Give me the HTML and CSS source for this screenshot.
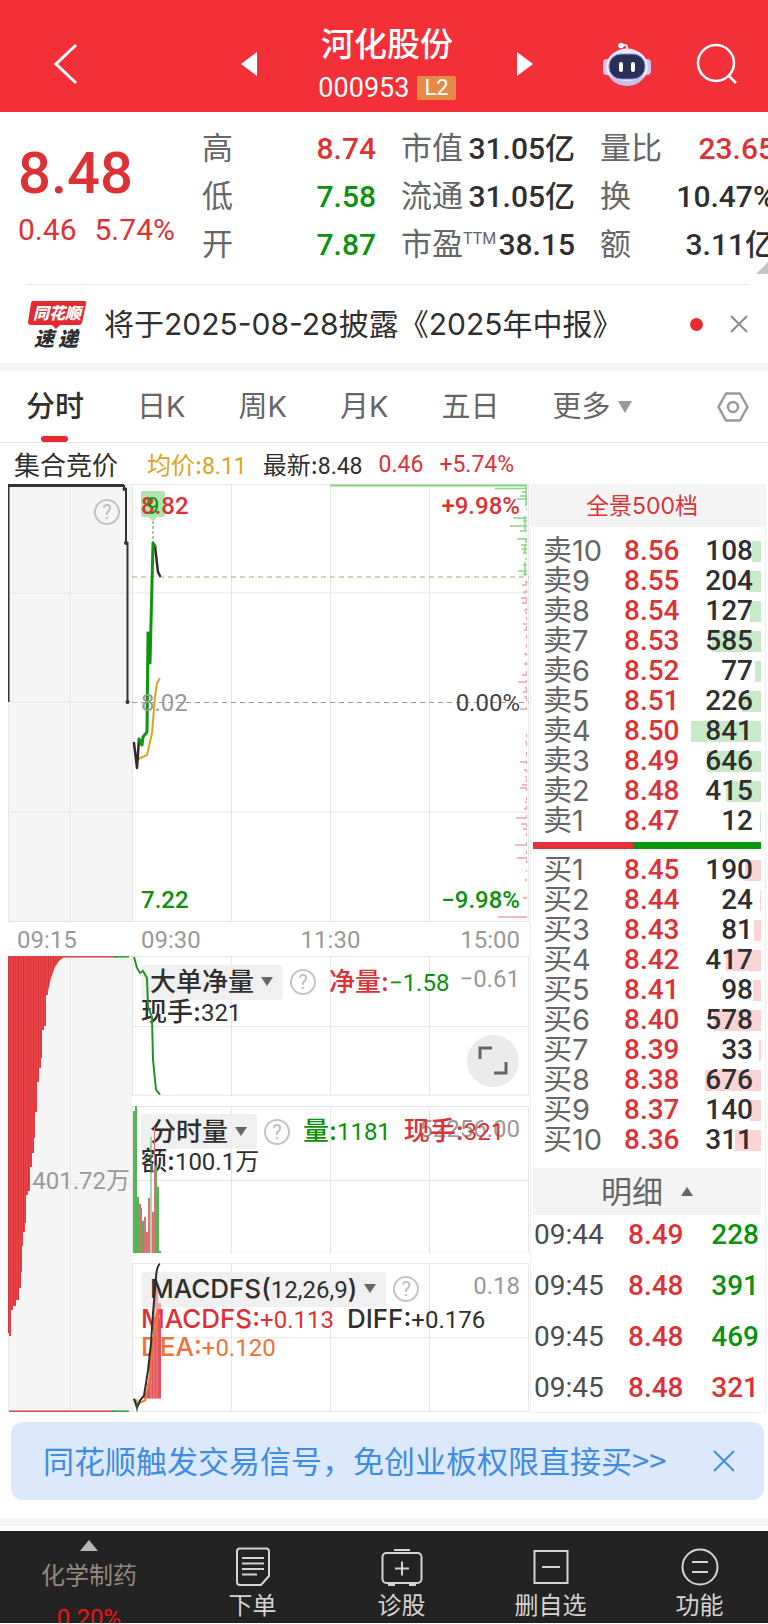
FILE: index.html
```html
<!DOCTYPE html>
<html lang="zh-CN">
<head>
<meta charset="utf-8">
<meta name="viewport" content="width=device-width, initial-scale=1">
<title>河化股份 000953</title>
<link rel="stylesheet" href="styles.css">
</head>
<body>
<header class="topbar">
  <button class="icon-btn back" aria-label="返回"><svg width="28" height="44" viewBox="0 0 28 44"><path d="M24 3 4 22l20 19" fill="none" stroke="#fff" stroke-width="3"/></svg></button>
  <div class="stock-nav">
    <button class="icon-btn" aria-label="上一只"><svg width="18" height="24" viewBox="0 0 18 24"><path d="M17 0v24L1 12z" fill="#fff"/></svg></button>
    <div class="stock-title">
      <h1 class="stock-name">河化股份</h1>
      <div class="stock-code">000953 <span class="level">L2</span></div>
    </div>
    <button class="icon-btn" aria-label="下一只"><svg width="18" height="24" viewBox="0 0 18 24"><path d="M1 0v24l16-12z" fill="#fff"/></svg></button>
  </div>
  <div class="top-actions">
    <button class="icon-btn" aria-label="智能助手"><svg width="48" height="44" viewBox="0 0 48 44">
      <path d="M24 9V5q0-2-3-2h-3" fill="none" stroke="#e9e2fb" stroke-width="2"/><circle cx="18" cy="3.500" r="2.800" fill="#fff"/>
      <rect x="0" y="17" width="8" height="16" rx="4" fill="#c9c4f2"/><rect x="40" y="17" width="8" height="16" rx="4" fill="#c9c4f2"/>
      <ellipse cx="24" cy="25" rx="21" ry="18.500" fill="#efeafd"/><path d="M6 33q18 12 36 0-5 11-18 11T6 33z" fill="#c5bff0"/>
      <rect x="6" y="12" width="36" height="25" rx="12" fill="#2a2f55" stroke="#8f86d8" stroke-width="1"/>
      <rect x="16" y="20" width="4" height="10" rx="2" fill="#fff"/><rect x="28" y="20" width="4" height="10" rx="2" fill="#fff"/></svg></button>
    <button class="icon-btn" aria-label="搜索"><svg width="42" height="42" viewBox="0 0 42 42"><g fill="none" stroke="#fff" stroke-width="2.500"><circle cx="20" cy="20" r="18"/><path d="m32 32 8 8"/></g></svg></button>
  </div>
</header>

<main>
<section class="quote">
  <div class="quote-price">
    <div class="last up">8.48</div>
    <div class="change up"><span>0.46</span><span>5.74%</span></div>
  </div>
  <dl class="stats stats-a">
    <div><dt>高</dt><dd class="up">8.74</dd></div>
    <div><dt>低</dt><dd class="down">7.58</dd></div>
    <div><dt>开</dt><dd class="down">7.87</dd></div>
  </dl>
  <dl class="stats stats-b">
    <div><dt>市值</dt><dd>31.05亿</dd></div>
    <div><dt>流通</dt><dd>31.05亿</dd></div>
    <div><dt>市盈<sup>TTM</sup></dt><dd>38.15</dd></div>
  </dl>
  <dl class="stats stats-c">
    <div><dt>量比</dt><dd class="up">23.65</dd></div>
    <div><dt>换</dt><dd>10.47%</dd></div>
    <div><dt>额</dt><dd>3.11亿</dd></div>
  </dl>
  <span class="corner"></span>
</section>

<section class="news">
  <svg class="news-logo" width="60" height="48" viewBox="0 0 60 48" role="img" aria-label="同花顺速递">
    <path d="M6 1h51q3 0 2 3l-4 19q-1 2-3 2H33l-4 4-4-4H4q-3 0-3-3L4 3q0-2 2-2z" fill="#e42a30"/>
    <text x="6" y="19" class="logo-a">同花顺</text>
    <text x="7" y="46" class="logo-b">速</text><text x="31" y="46" class="logo-b">递</text>
  </svg>
  <a class="news-text" href="#">将于2025-08-28披露《2025年中报》</a>
  <span class="dot"></span>
  <button class="icon-btn" aria-label="关闭"><svg width="18" height="18" viewBox="0 0 18 18"><path d="m1 1 16 16M17 1 1 17" stroke="#8c8c8c" stroke-width="2"/></svg></button>
</section>

<nav class="tabs">
  <button class="tab active">分时</button>
  <button class="tab">日K</button>
  <button class="tab">周K</button>
  <button class="tab">月K</button>
  <button class="tab">五日</button>
  <button class="tab">更多<span class="caret"></span></button>
  <button class="icon-btn gear" aria-label="设置"><svg width="32" height="32" viewBox="0 0 32 32"><g fill="none" stroke="#999" stroke-width="2.500"><path d="M9 2.500h14L30.500 16 23 29.500H9L1.500 16z" stroke-linejoin="round"/><circle cx="16" cy="16" r="5"/></g></svg></button>
</nav>

<div class="info">
  <span class="info-title">集合竞价</span>
  <span class="avg">均价:<b>8.11</b></span>
  <span>最新:<b>8.48</b></span>
  <span class="up"><b>0.46</b></span>
  <span class="up"><b>+5.74%</b></span>
</div>

<div class="board">
  <div class="charts">
    <section class="panel auction">
      <svg class="plot" viewBox="0 0 124 438" preserveAspectRatio="none">
        <path class="grid" d="M.5 0v438M62 0v438M0 109h124M0 218h124M0 328h124M0 437.500h124"/>
        <path d="M.5 218V1.500" fill="none" stroke="#333" stroke-width="2"/>
        <path d="M0 1.500H116" fill="none" stroke="#333" stroke-width="3"/>
        <path d="M116 1v4h2v54h1.500v159" fill="none" stroke="#333" stroke-width="2"/>
        <g fill="#333"><circle cx="116.500" cy="5" r="2"/><circle cx="118" cy="59" r="2"/><circle cx="119.500" cy="218" r="2"/></g>
      </svg>
      <button class="help help-corner" aria-label="集合竞价说明">?</button>
    </section>
    <section class="panel price">
      <svg class="plot" viewBox="0 0 397 438" preserveAspectRatio="none">
        <path class="grid" d="M.5 0v438M99.500 0v438M198.500 0v438M297.500 0v438M396.500 0v438M0 .5h397M0 109h397M0 328h397M0 437.500h397"/>
        <path d="M0 93h397" stroke="#a9a777" stroke-dasharray="5 4"/>
        <path d="M0 218.500h397" stroke="#999" stroke-dasharray="5 4"/>
        <path d="M11 7h20q2 0 2 2v22q0 2-2 2h-5l-5 4-5-4h-5q-2 0-2-2V9q0-2 2-2z" fill="#afe3af"/>
        <path d="M21 37v22" stroke="#4a9a4a" stroke-dasharray="3 2"/>
        <path d="M5 277 8 274 15 271 20 249 23 213 25 199 28 194" fill="none" stroke="#dea31c" stroke-width="2"/>
        <g fill="none" stroke-linejoin="round" stroke-linecap="round">
          <path d="M2 259 5 284 7 255M23 62 26 88 28 92" stroke="#2c2c2c" stroke-width="2.500"/>
          <path d="M7 255 10 261 11 253 15 248 16 149 18 179 21 59 23 62" stroke="#0c970c" stroke-width="3"/>
        </g>
        <g fill="none" stroke-width="1.500">
          <path stroke="#86d586" stroke-width="2" d="M198 1.500h197"/>
          <path stroke="#86d586" d="M363 4.500h32M390 8h5M388 12h7M385 15h10M393 20h2M394 25h1M381 34h14M391 37h4M378 42h17M388 47h7M385 55h10M389 61h6M390 65h5M391 69h4M393 75h2M391 81h4M386 87h9M391 90h4"/>
          <path stroke="#eba1aa" d="M393 98h2M390 101h5M391 108h4M389 114h6M390 119h5M392 126h3M393 129h2M391 140h4M392 146h3M394 154h1M394 163h1M392 170h3M392 180h3M390 191h5M386 198h9M393 204h2M391 208h4M392 213h3M388 225h7M394 251h1M393 258h2M394 272h1M388 278h7M392 286h3M393 293h2M390 301h5M388 304h7M393 318h2M392 325h3M384 334h11M389 340h6M391 345h4M383 361h12M385 374h10M394 387h1M393 396h2M391 414h4M366 433h29"/>
          <path stroke="#86d586" d="M394 2v20M393 32v15M394 54v5M393 60v9M393 78v14"/>
          <path stroke="#eba1aa" stroke-width="1" stroke-dasharray="3 6" d="M394.500 97v130M394.500 250v132"/>
        </g>
      </svg>
      <div class="levels">
        <div class="level-row up"><span>8.82</span><span>+9.98%</span></div>
        <div class="level-row flat"><span>8.02</span><span class="zero">0.00%</span></div>
        <div class="level-row down"><span>7.22</span><span>−9.98%</span></div>
      </div>
      <span class="signal">9</span>
    </section>
    <div class="axis axis-a"><span>09:15</span></div>
    <div class="axis"><span>09:30</span><span>11:30</span><span>15:00</span></div>

    <section class="panel auction auction-vol">
      <svg class="plot" viewBox="0 0 124 456" preserveAspectRatio="none">
        <defs><pattern id="stripe" width="2.500" height="10" patternUnits="userSpaceOnUse"><rect width="2.500" height="10" fill="#ec4549"/><rect width=".8" height="10" fill="#cf3238"/></pattern></defs>
        <path class="grid" d="M.5 0v456M62 0v456M0 .5h124M0 228h124M0 455.500h124"/>
        <path d="M0 0V377H1V380H3V354H5V350H8V344H11V332H13V316H14V290H15V276H17V267H18V239H20V235H22V211H24V197H26V182H27V156H29V126H31V112H33V102H34V74H36V70H38V39H40V35L43 22 47 11 51 5 56 1V0z" fill="url(#stripe)"/>
        <path d="M50 .5h60M1 455.500h105" stroke="#d9444b" stroke-width="2"/><path d="M106 .5h15M104 455.500h17" stroke="#25a32b" stroke-width="2"/>
      </svg>
      <span class="vol-mark">401.72万</span>
    </section>
    <div class="subcharts">
      <section class="panel sub">
        <svg class="plot" viewBox="0 0 397 140" preserveAspectRatio="none">
          <path class="grid" d="M.5 0v140M99.500 0v140M198.500 0v140M297.500 0v140M396.500 0v140M0 .5h397M0 70.500h397M0 139.500h397"/>
        </svg>
        <div class="legend">
          <div class="legend-line">
            <button class="chip">大单净量<span class="caret"></span></button><button class="help" aria-label="大单净量说明">?</button>
            <span class="up">净量:<b class="down">−1.58</b></span>
          </div>
          <div class="legend-line"><span>现手:<b>321</b></span></div>
        </div>
        <span class="scale">−0.61</span>
        <svg class="plot trace" viewBox="0 0 397 140" preserveAspectRatio="none">
          <path d="M2 1 5 12 8 17 11 15 15 22 16 51 20 61 21 104 24 134 28 139" fill="none" stroke="#23902a" stroke-width="2"/>
        </svg>
        <button class="expand" aria-label="全屏"><svg width="30" height="30" viewBox="0 0 30 30"><path d="M2 13V2h12M16 27h12V16" fill="none" stroke="#666" stroke-width="3"/></svg></button>
      </section>
      <section class="panel sub">
        <svg class="plot" viewBox="0 0 397 148" preserveAspectRatio="none">
          <path class="grid" d="M.5 0v148M99.500 0v148M198.500 0v148M297.500 0v148M396.500 0v148M0 .5h397M0 74.500h397M0 147.500h397"/>
        </svg>
        <span class="scale">52256.00</span>
        <div class="legend">
          <div class="legend-line">
            <button class="chip">分时量<span class="caret"></span></button><button class="help" aria-label="分时量说明">?</button>
            <span class="down">量:<b>1181</b></span><span class="up">现手:<b>321</b></span>
          </div>
          <div class="legend-line"><span>额:<b>100.1万</b></span></div>
        </div>
        <svg class="plot trace" viewBox="0 0 397 148" preserveAspectRatio="none">
          <g fill="none" stroke-width="2"><path stroke="#53b653" d="M2 5v143M4 0v148M6 91v57M11 115v33M24 60v88M26 81v67M28 145v3"/><path stroke="#53b653" stroke-width="1" d="M19 31v117"/><path stroke="#e07078" d="M8 98v50M13 111v37M15 126v22M17 92v56M21 106v42"/><path stroke="#e07078" stroke-width="1" d="M22.500 21v127"/><path stroke="#888" stroke-width="1" d="M9.500 102v46"/></g>
        </svg>
      </section>
      <section class="panel sub">
        <svg class="plot" viewBox="0 0 397 148" preserveAspectRatio="none">
          <path class="grid" d="M.5 0v148M99.500 0v148M198.500 0v148M297.500 0v148M396.500 0v148M0 .5h397M0 74.500h397M0 147.500h397"/>
        </svg>
        <div class="legend">
          <div class="legend-line">
            <button class="chip">MACDFS(<b>12,26,9</b>)<span class="caret"></span></button><button class="help" aria-label="MACDFS说明">?</button>
          </div>
          <div class="legend-line"><span class="up">MACDFS:<b>+0.113</b></span><span>DIFF:<b>+0.176</b></span></div>
          <div class="legend-line"><span class="dea">DEA:<b>+0.120</b></span></div>
        </div>
        <span class="scale">0.18</span>
        <svg class="plot trace" viewBox="0 0 397 148" preserveAspectRatio="none">
          <path d="M22 54V25H26V40H29V54z" fill="#e4525b" fill-opacity=".5"/>
          <path d="M12 135V129H15V120H17V95H19V75H21V54H29V135z" fill="#e4525b"/>
          <path d="M19 80V135M22 54V135M25 54V135" stroke="#f08a8c" stroke-width="1"/>
          <path d="M2 135 5 142 8 139 13 137 17 118 21 82 26 46" fill="none" stroke="#f0762f" stroke-width="2"/>
          <path d="M2 135 5 144 8 137 12 132 16 107 19 80 21 50 24 14Q25 2 28 1" fill="none" stroke="#2c2c2c" stroke-width="2"/>
          <path d="M5 136v12" stroke="#23802a"/>
        </svg>
      </section>
    </div>
  </div>

  <aside class="book">
    <button class="book-title">全景500档</button>
    <table class="orders asks">
      <tr><th>卖10</th><td>8.56</td><td class="qty" style="--w:9px">108</td></tr>
      <tr><th>卖9</th><td>8.55</td><td class="qty" style="--w:12px">204</td></tr>
      <tr><th>卖8</th><td>8.54</td><td class="qty" style="--w:11px">127</td></tr>
      <tr><th>卖7</th><td>8.53</td><td class="qty" style="--w:49px">585</td></tr>
      <tr><th>卖6</th><td>8.52</td><td class="qty" style="--w:6px">77</td></tr>
      <tr><th>卖5</th><td>8.51</td><td class="qty" style="--w:19px">226</td></tr>
      <tr><th>卖4</th><td>8.50</td><td class="qty" style="--w:70px">841</td></tr>
      <tr><th>卖3</th><td>8.49</td><td class="qty" style="--w:54px">646</td></tr>
      <tr><th>卖2</th><td>8.48</td><td class="qty" style="--w:35px">415</td></tr>
      <tr><th>卖1</th><td>8.47</td><td class="qty" style="--w:1px">12</td></tr>
    </table>
    <div class="ratio"></div>
    <table class="orders bids">
      <tr><th>买1</th><td>8.45</td><td class="qty" style="--w:16px">190</td></tr>
      <tr><th>买2</th><td>8.44</td><td class="qty" style="--w:1px">24</td></tr>
      <tr><th>买3</th><td>8.43</td><td class="qty" style="--w:7px">81</td></tr>
      <tr><th>买4</th><td>8.42</td><td class="qty" style="--w:35px">417</td></tr>
      <tr><th>买5</th><td>8.41</td><td class="qty" style="--w:8px">98</td></tr>
      <tr><th>买6</th><td>8.40</td><td class="qty" style="--w:48px">578</td></tr>
      <tr><th>买7</th><td>8.39</td><td class="qty" style="--w:2px">33</td></tr>
      <tr><th>买8</th><td>8.38</td><td class="qty" style="--w:56px">676</td></tr>
      <tr><th>买9</th><td>8.37</td><td class="qty" style="--w:11px">140</td></tr>
      <tr><th>买10</th><td>8.36</td><td class="qty" style="--w:26px">311</td></tr>
    </table>
    <button class="detail-title">明细<span class="caret-up"></span></button>
    <table class="trades">
      <tr><td>09:44</td><td class="up">8.49</td><td class="down">228</td></tr>
      <tr><td>09:45</td><td class="up">8.48</td><td class="down">391</td></tr>
      <tr><td>09:45</td><td class="up">8.48</td><td class="down">469</td></tr>
      <tr><td>09:45</td><td class="up">8.48</td><td class="up">321</td></tr>
    </table>
  </aside>
</div>

<section class="promo">
  <a class="promo-text" href="#">同花顺触发交易信号，免创业板权限直接买&gt;&gt;</a>
  <button class="icon-btn" aria-label="关闭提示"><svg width="22" height="22" viewBox="0 0 22 22"><path d="m1 1 20 20M21 1 1 21" stroke="#3f8ce4" stroke-width="2"/></svg></button>
</section>
</main>

<footer class="bottom-nav">
  <button class="nav-item sector"><span class="nav-up"></span><span>化学制药</span><span class="pct">0.20%</span></button>
  <button class="nav-item"><svg width="36" height="40" viewBox="0 0 36 40"><g fill="none" stroke="#d4d4d4" stroke-width="2"><path d="M5 1.500h26q3 0 3 3V29l-8 9H5q-3 0-3-3V4.500q0-3 3-3z"/><path d="M7 11h22M7 16.500h22M7 22h22M7 27.500h15"/></g></svg><span>下单</span></button>
  <button class="nav-item"><svg width="42" height="40" viewBox="0 0 42 40"><g fill="none" stroke="#d4d4d4" stroke-width="2"><rect x="1.500" y="6" width="39" height="30" rx="4"/><path d="M13 3h16M7 38h7M28 38h7M21 14.500v14M14 21.500h14"/></g></svg><span>诊股</span></button>
  <button class="nav-item"><svg width="36" height="40" viewBox="0 0 36 40"><g fill="none" stroke="#d4d4d4" stroke-width="2"><path d="M1.500 4h33v32h-33zM9 20h18"/></g></svg><span>删自选</span></button>
  <button class="nav-item nav-last"><svg width="38" height="40" viewBox="0 0 38 40"><g fill="none" stroke="#d4d4d4" stroke-width="2"><circle cx="19" cy="20" r="17.500"/><path d="M11 15h16M11 25h16"/></g></svg><span>功能</span></button>
</footer>
</body>
</html>
```
FILE: styles.css
```css
* { box-sizing: border-box; }
:root {
  --red: #dc3236;
  --green: #0a920a;
  --ink: #2f2f2f;
  --gray: #666;
  --line: #e6e6e6;
  --band: #f4f4f4;
  --num: Roboto, "Noto Sans CJK SC", sans-serif;
  --text: Inter, "Noto Sans CJK SC", sans-serif;
}
body { margin: 0; background: #fff; color: var(--ink); font-family: var(--text); overflow-x: hidden; }
button { border: 0; padding: 0; margin: 0; background: none; color: inherit; font: inherit; white-space: nowrap; }
a { color: inherit; text-decoration: none; }
h1, dl, dd { margin: 0; }
svg { display: block; }
b { font-family: var(--num); font-weight: 400; }
.icon-btn { display: flex; flex: none; }
.up { color: var(--red); }
.down { color: var(--green); }

/* header */
.topbar { display: grid; grid-template-columns: 1fr auto 1fr; align-items: center; height: 112px; padding: 16px 30px 0 36px; background: #f32f38; color: #fff; }
.back { margin-left: 16px; }
.stock-nav { display: flex; align-items: center; gap: 60px; }
.stock-title { display: flex; flex-direction: column; align-items: center; width: 138px; padding-top: 5px; }
.stock-name { font-size: 33px; line-height: 42px; font-weight: 500; }
.stock-code { display: flex; align-items: center; gap: 8px; font: 27px/46px var(--num); }
.level { padding: 0 7px; background: #e58b47; border-radius: 2px; font-size: 22px; line-height: 24px; }
.top-actions { display: flex; justify-content: flex-end; align-items: center; gap: 45px; }

/* quote */
.quote { position: relative; display: flex; height: 172px; padding: 13px 0 0 18px; overflow: hidden; font-family: var(--num); font-weight: 500; }
.quote-price { width: 184px; flex: none; }
.last { font-size: 58px; line-height: 68px; padding-top: 14px; }
.change { display: flex; gap: 18px; font-size: 30px; line-height: 46px; font-weight: 400; }
.stats { flex: none; font-size: 30px; line-height: 48px; white-space: nowrap; }
.stats div { display: flex; justify-content: space-between; height: 48px; }
.stats dt { color: var(--gray); font-size: 31px; font-weight: 400; }
.stats sup { font-size: 16px; line-height: 16px; vertical-align: 11px; }
.stats-a { width: 174px; margin-right: 25px; }
.stats-b { width: 174px; margin-right: 25px; }
.stats-c { width: 175px; }
.corner { position: absolute; right: 0; bottom: 10px; border-left: 12px solid transparent; border-bottom: 12px solid #c4c4c4; }

/* news */
.news { display: flex; align-items: center; height: 79px; margin: 0 20px 0 27px; border-top: 1px solid var(--line); }
.news-logo { flex: none; margin-right: 17px; font-family: "Noto Sans CJK SC", sans-serif; font-weight: 900; font-style: italic; }
.logo-a { font-size: 16px; fill: #fff; }
.logo-b { font-size: 20px; fill: #2f2f2f; }
.news-text { flex: 1; font-size: 30px; line-height: 40px; white-space: nowrap; }
.dot { width: 13px; height: 13px; margin-right: 27px; border-radius: 50%; background: #ea2a2f; }

/* tabs */
.tabs { display: flex; align-items: center; height: 80px; padding: 0 19px 0 26px; border-top: 8px solid var(--band); border-bottom: 1px solid var(--line); gap: 53px; }
.tab { position: relative; font-size: 29px; line-height: 70px; color: var(--gray); }
.tab.active { color: var(--ink); font-weight: 500; }
.tab.active::after { content: ""; position: absolute; left: 50%; bottom: 0; width: 27px; height: 6px; margin-left: -14px; border-radius: 3px; background: #e5292e; }
.caret { display: inline-block; margin-left: 7px; vertical-align: 4px; border: 7px solid transparent; border-top: 12px solid #999; border-bottom: 0; }
.gear { margin-left: auto; }

/* info line */
.info { display: flex; align-items: center; gap: 16px; height: 41px; padding-left: 14px; font-size: 24px; white-space: nowrap; }
.info-title { font-size: 26px; margin-right: 13px; }
.info b { font-size: 23px; }
.avg { color: #dea31c; }

/* board */
.board { display: grid; grid-template-columns: 521fr 236fr; gap: 1px; padding: 0 2px 0 8px; }
.charts { display: grid; grid-template-columns: 124fr 397fr; grid-template-rows: 438px 34px 456px; min-width: 0; }
.panel { position: relative; }
.plot { position: absolute; inset: 0; width: 100%; height: 100%; }
.trace { pointer-events: none; }
.grid { fill: none; stroke: var(--line); stroke-width: 1; }
.auction { background: #f5f5f5; }
.help { display: flex; align-items: center; justify-content: center; width: 26px; height: 26px; border: 2px solid #c4c4c4; border-radius: 50%; color: #bbb; font: 20px/22px var(--num); }
.help-corner { position: absolute; right: 12px; top: 15px; }
.levels { position: relative; display: flex; flex-direction: column; justify-content: space-between; height: 100%; padding: 7px 9px; font: 500 24px/30px var(--num); }
.level-row { display: flex; justify-content: space-between; }
.flat { color: #999; font-weight: 400; }
.zero { color: #444; }
.signal { position: absolute; left: 14px; top: 7px; color: #0c970c; font: 24px/30px var(--num); }
.axis { display: flex; justify-content: space-between; padding: 0 9px; font: 24px/36px var(--num); color: #999; }
.vol-mark { position: absolute; right: 2px; top: 50%; margin-top: -18px; font: 24px/30px var(--num); color: #999; }
.subcharts { display: grid; grid-template-rows: 140fr 148fr 149fr; row-gap: 10px; }
.legend { position: relative; padding: 10px 0 0 9px; font-size: 26px; line-height: 28px; white-space: nowrap; font-weight: 500; }
.legend-line { display: flex; align-items: center; gap: 13px; height: 28px; }
.legend-line:first-child { height: 32px; }
.legend .help { margin-left: -6px; }
.chip { height: 35px; padding: 0 10px 0 9px; border-radius: 3px; background: #f0f0f0; }
.chip .caret { border-width: 9px 6px 0; border-top-color: #666; vertical-align: 5px; }
.legend b { font-size: 24px; }
.dea { color: #f0713a; }
.scale { position: absolute; right: 9px; top: 8px; font: 24px/30px var(--num); color: #999; }
.expand { position: absolute; right: 10px; bottom: 9px; display: flex; align-items: center; justify-content: center; width: 52px; height: 52px; border-radius: 50%; background: #ebebeb; }

/* order book */
.book { min-width: 0; border: 1px solid #f0f0f0; border-top: 0; font-family: var(--num); }
.book-title { display: block; width: 100%; height: 43px; margin-bottom: 9px; padding-right: 12px; background: var(--band); color: var(--red); font: 23px/40px var(--text); }
.book table { width: 100%; table-layout: fixed; border-collapse: collapse; font-size: 28px; }
.book tr > * { padding: 0; text-align: left; }
.orders tr { height: 30px; line-height: 30px; }
.orders th { width: 93px; padding-left: 12px; font: 29px/30px var(--text); color: var(--gray); }
.orders td { width: 60px; color: var(--red); font-weight: 500; }
.orders .qty { width: auto; padding-right: 12px; text-align: right; color: var(--ink); background: linear-gradient(var(--bar), var(--bar)) right 4px center / var(--w) 21px no-repeat; }
.asks { --bar: #c9eac9; }
.bids { --bar: #fbd3d5; }
.ratio { height: 7px; margin: 6px 4px 6px 2px; background: linear-gradient(90deg, #e53035 44%, #0a980a 44%); }
.detail-title { display: flex; align-items: center; justify-content: center; width: calc(100% - 6px); height: 47px; margin: 13px 4px 2px 2px; background: var(--band); color: var(--gray); font: 31px/44px var(--text); }
.caret-up { margin-left: 18px; border: 6px solid transparent; border-bottom: 9px solid #666; border-top: 0; }
.trades tr { height: 51px; line-height: 36px; vertical-align: top; }
.trades tr:last-child { height: 42px; }
.trades td { width: 60px; font-weight: 500; }
.trades td:first-child { width: 97px; padding-left: 3px; color: #4c4c4c; font-weight: 400; }
.trades td:last-child { width: auto; padding-right: 6px; text-align: right; }

/* promo */
.promo { display: flex; align-items: center; justify-content: space-between; height: 78px; margin: 9px 4px 18px 11px; padding: 0 29px 0 32px; border-radius: 12px; background: #dce9fc; color: #3f8ce4; }
.promo-text { padding-bottom: 3px; font-size: 31px; line-height: 44px; white-space: nowrap; font-family: "Noto Sans CJK SC", sans-serif; }

/* bottom bar */
.bottom-nav { display: grid; grid-template-columns: 178fr 149fr 149fr 149fr 143fr; height: 105px; border-top: 8px solid var(--band); padding-top: 5px; background: linear-gradient(#fff 5px, #232323 5px); overflow: hidden; }
.nav-item { display: flex; flex-direction: column; align-items: center; justify-content: flex-start; gap: 2px; padding-top: 16px; color: #d4d4d4; font-size: 24px; line-height: 34px; }
.nav-last { padding-left: 6px; }
.sector { padding-top: 9px; gap: 8px; color: #95877c; }
.sector .pct { font-family: var(--num); color: #ee1515; }
.nav-up { border: 9px solid transparent; border-bottom: 11px solid #b8b8b8; border-top: 0; }
```
